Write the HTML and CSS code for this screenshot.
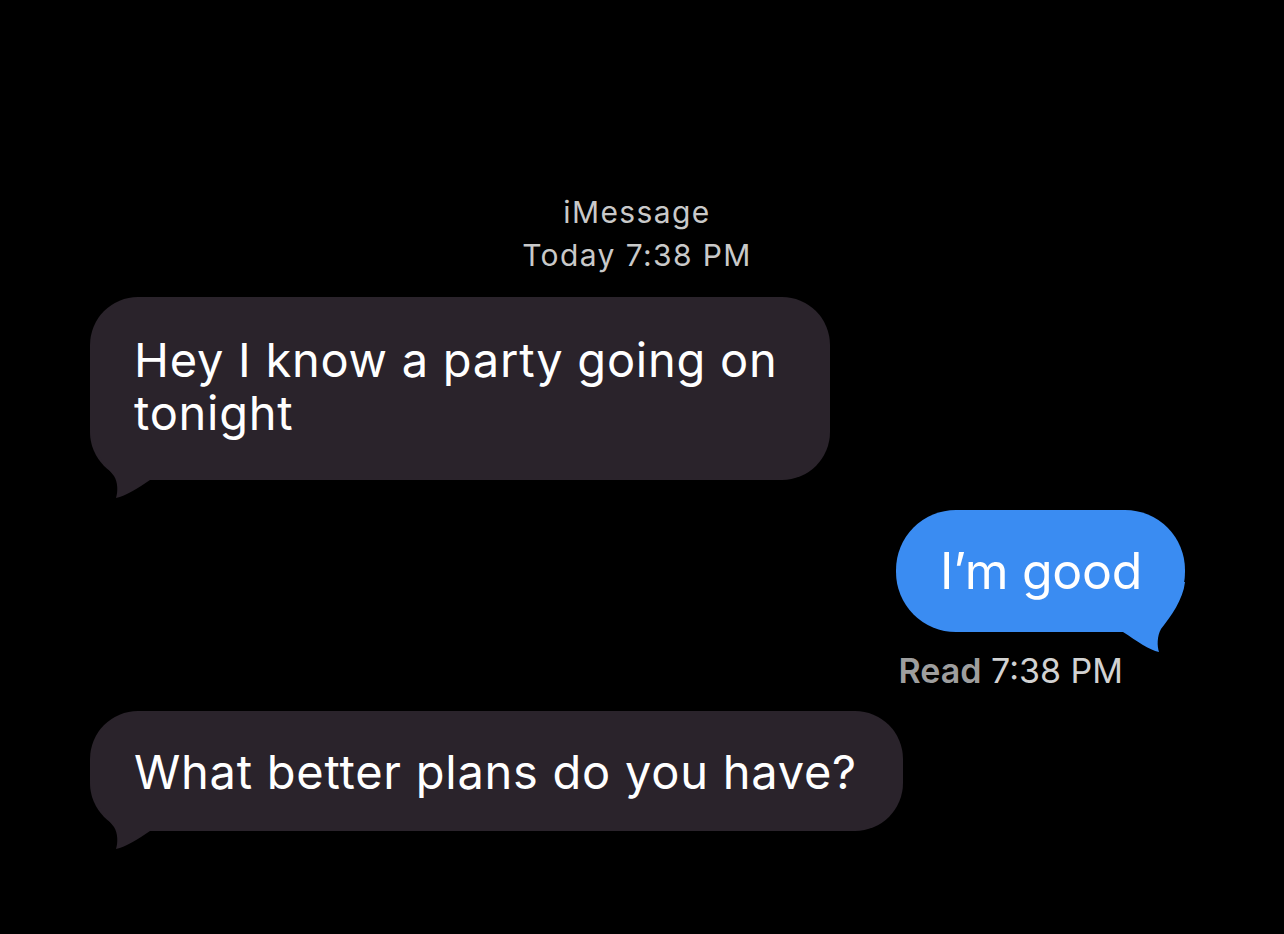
FILE: index.html
```html
<!DOCTYPE html>
<html lang="en">
<head>
<meta charset="utf-8">
<title>iMessage</title>
<link rel="stylesheet" href="styles.css">
</head>
<body>
<main class="thread">
  <header class="thread-head">
    <div class="service">iMessage</div>
    <div class="stamp">Today 7:38 PM</div>
  </header>

  <div class="row row-in">
    <div class="bubble bubble-in bubble-first">
      <p class="text text-wrap">Hey I know a party going on tonight</p>
      <svg class="tail tail-in" viewBox="0 0 80 70" aria-hidden="true"><path d="M0 0 C 2 18, 14 34, 24 46 C 28 52, 28 62, 26 68 C 36 66, 48 58, 60 50 L 80 50 L 80 0 Z"/></svg>
    </div>
  </div>

  <div class="row row-out">
    <div class="bubble bubble-out">
      <p class="text text-out">I’m good</p>
      <svg class="tail tail-out" viewBox="0 0 80 72" aria-hidden="true"><path d="M0 0 C 2 18, 14 34, 24 47 C 28 54, 28 64, 26 70 C 36 68, 48 59, 62 50 L 80 50 L 80 0 Z"/></svg>
    </div>
    <div class="receipt"><span class="receipt-label">Read</span> 7:38 PM</div>
  </div>

  <div class="row row-in">
    <div class="bubble bubble-in bubble-single">
      <p class="text">What better plans do you have?</p>
      <svg class="tail tail-in" viewBox="0 0 80 70" aria-hidden="true"><path d="M0 0 C 2 18, 14 34, 24 46 C 28 52, 28 62, 26 68 C 36 66, 48 58, 60 50 L 80 50 L 80 0 Z"/></svg>
    </div>
  </div>
</main>
</body>
</html>
```

FILE: styles.css
```css
* { box-sizing: border-box; }

html, body {
  margin: 0;
  padding: 0;
  background: #000;
}

body {
  font-family: Inter, "Noto Sans", "Liberation Sans", sans-serif;
  color: #fff;
  width: 1284px;
  height: 934px;
  overflow: hidden;
}

.thread {
  display: flex;
  flex-direction: column;
  padding-top: 191px;
}

.thread-head {
  text-align: center;
  font-size: 30px;
  line-height: 43px;
  letter-spacing: 1.4px;
  color: #c9c9c9;
  padding-right: 10px;
  margin-bottom: 20px;
}

.row {
  display: flex;
  flex-direction: column;
}

.row-in {
  align-items: flex-start;
  padding-left: 90px;
}

.row-out {
  align-items: flex-end;
  padding-right: 99px;
  margin-top: 30px;
}

.bubble {
  position: relative;
}

.bubble-in {
  background: #2a232b;
  border-radius: 48px;
  padding: 0 46px 0 44px;
}

.bubble-first {
  padding-top: 36px;
  padding-bottom: 41px;
}

.bubble-single {
  margin-top: 20px;
  padding-top: 34px;
  padding-bottom: 33px;
}

.text {
  margin: 0;
  position: relative;
  z-index: 1;
  font-size: 47px;
  line-height: 53px;
  letter-spacing: 0.75px;
  white-space: nowrap;
}

.text-wrap {
  white-space: normal;
  width: 650px;
}

.bubble-out {
  background: #3a8cf2;
  border-radius: 60px;
  padding: 31px 43px 31px 44px;
}

.text-out {
  font-size: 50px;
  line-height: 60px;
  letter-spacing: -0.3px;
}

.tail {
  position: absolute;
  width: 80px;
  display: block;
}

.tail-in {
  left: 0;
  bottom: -20px;
  height: 70px;
  fill: #2a232b;
}

.tail-out {
  right: 0;
  bottom: -22px;
  height: 72px;
  fill: #3a8cf2;
  transform: scaleX(-1);
}

.receipt {
  margin-top: 19px;
  margin-right: 62px;
  font-size: 34px;
  line-height: 40px;
  color: #d2d2d2;
}

.receipt-label {
  font-weight: 600;
  color: #9e9e9e;
}
```
